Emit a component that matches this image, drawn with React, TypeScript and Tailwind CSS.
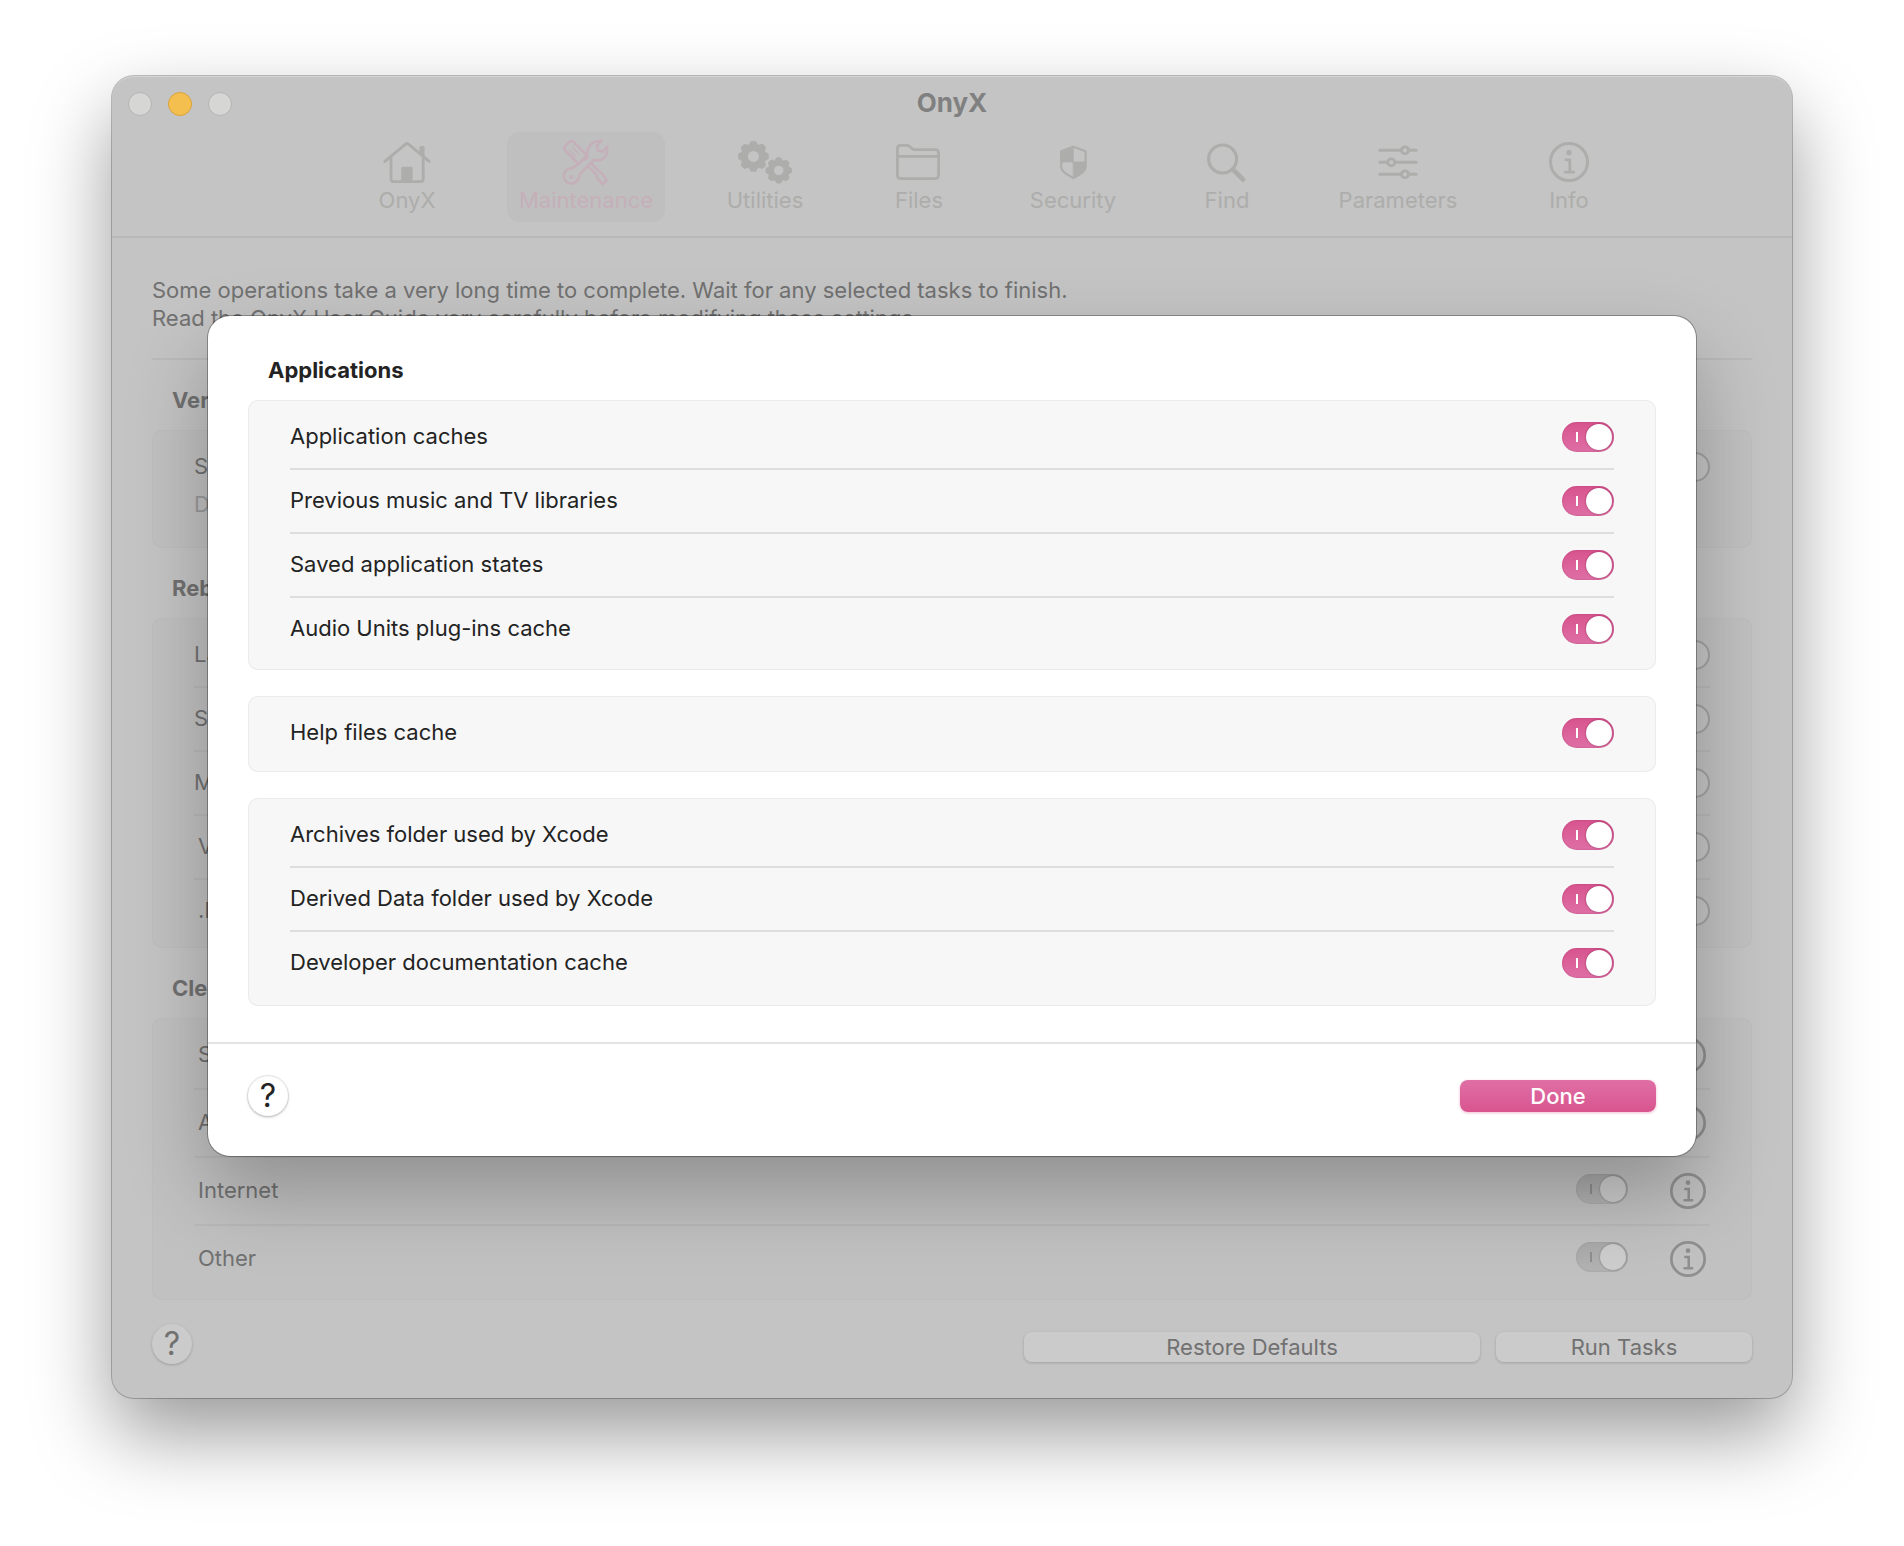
import React, { useId } from "react";

const FONT = "font-['Inter','Liberation_Sans',sans-serif]";

/* ---------- Toolbar icons ---------- */

function Icon({ children }: { children: React.ReactNode }) {
  return (
    <svg
      viewBox="0 0 56 48"
      className="h-12 w-14"
      fill="none"
      stroke="currentColor"
      strokeWidth="2.8"
      strokeLinecap="round"
      strokeLinejoin="round"
      aria-hidden="true"
    >
      {children}
    </svg>
  );
}

function HomeIcon() {
  return (
    <Icon>
      <path d="M5.8 23.4 26.6 6.1a2.2 2.2 0 0 1 2.8 0L50.2 23.4" />
      <path d="M12 19v22a2.6 2.6 0 0 0 2.6 2.6h27A2.6 2.6 0 0 0 44.2 41V19" />
      <rect x="22.3" y="28.8" width="11.3" height="14.8" rx="1.2" fill="currentColor" stroke="none" />
      <path d="M40.4 15V9.500a1.500 1.500 0 0 1 1.500-1.500h2.200a1.500 1.500 0 0 1 1.500 1.500V19.500z" fill="currentColor" stroke="none" />
    </Icon>
  );
}

function ToolsIcon() {
  return (
    <Icon>
      <g strokeWidth="2.5">
        <path d="M20.5 26 7.2 12.7c-1.5-1.5-1.5-3 0-4.5l4-4c1.5-1.5 3-1.5 4.5 0L29 17.5z" />
        <path d="M11.5 12.3 17.3 18.3M14.8 9.8 20.3 15.5" strokeWidth="1.5" />
        <path d="M29.5 19.5C27.7 12 31.5 2.8 43.5 2.8L38.7 7.8l1.3 4.7 4.4 1.2 4.7-5C50.5 17 45 24.3 35.6 21.8L23 34.8c-1.5 1.5-1.7 4.5-3.2 7.2A7.6 7.6 0 1 1 8.2 32.4c2.3-2 6.3-1.9 8.3-3.6z" />
        <circle cx="13.2" cy="39" r="2" fill="currentColor" stroke="none" />
        <path d="M29.8 28.2 38.4 36.6l.5 3.2 5.8 6.4 3.9-3.8-4.2-6.7-2.7-1.8L33.3 25.4" />
      </g>
    </Icon>
  );
}

const TEETH = [0, 45, 90, 135, 180, 225, 270, 315];

function Gear({ cx, cy, r }: { cx: number; cy: number; r: number }) {
  return (
    <g>
      <circle cx={cx} cy={cy} r={r * 0.57} strokeWidth={r * 0.43} />
      {TEETH.map((angle) => (
        <path
          key={angle}
          d={`M${cx - r * 0.24} ${cy - r * 0.72}L${cx - r * 0.12} ${cy - r * 0.92}H${cx + r * 0.12}L${cx + r * 0.24} ${cy - r * 0.72}z`}
          transform={`rotate(${angle} ${cx} ${cy})`}
          fill="currentColor"
          strokeWidth={r * 0.14}
        />
      ))}
    </g>
  );
}

function GearsIcon() {
  return (
    <Icon>
      <Gear cx={16.4} cy={18.4} r={15.5} />
      <Gear cx={41.7} cy={32.4} r={13.3} />
    </Icon>
  );
}

function FolderIcon() {
  return (
    <Icon>
      <path d="M6.4 37V11c0-2.4 1.2-3.6 3.6-3.6h6.2c3 0 4 4.2 7.2 4.2H44c2.4 0 3.6 1.2 3.6 3.6V37c0 2.4-1.2 3.6-3.6 3.6H10c-2.4 0-3.6-1.2-3.6-3.6zM6.4 18.4h41.2" />
    </Icon>
  );
}

function ShieldIcon() {
  return (
    <Icon>
      <path d="M28.4 8.8 40.6 13.3V29c0 5-7 8.5-12.2 11C23.2 37.5 16.2 34 16.2 29V13.3z" strokeWidth="2.2" />
      <path d="M28.4 8.8V24H16.2V13.3zM28.4 24h12.2v5c0 5-7 8.5-12.2 11z" fill="currentColor" strokeWidth="0.6" />
    </Icon>
  );
}

function FindIcon() {
  return (
    <Icon>
      <circle cx="23.6" cy="21" r="14" strokeWidth="3.2" />
      <path d="M34 31.5 44 41.5" strokeWidth="4.6" />
    </Icon>
  );
}

function SlidersIcon() {
  return (
    <Icon>
      <path d="M9.8 12.3h21.2M39.2 12.3h7M9.8 24.3h7.2M25.5 24.3h20.7M9.8 36.3h21.2M39.2 36.3h7" strokeWidth="3" />
      <circle cx="35" cy="12.3" r="3.5" />
      <circle cx="21.3" cy="24.3" r="3.5" />
      <circle cx="35" cy="36.3" r="3.5" />
    </Icon>
  );
}

function InfoShape() {
  return (
    <>
      <circle cx="28" cy="24" r="18.5" strokeWidth="3" />
      <circle cx="28" cy="14.7" r="2.6" fill="currentColor" stroke="none" />
      <path d="M25 21.8h3.8V34M24.2 34.2h8.4" strokeWidth="2.8" />
    </>
  );
}

const TOOLBAR = [
  { label: "OnyX", icon: <HomeIcon />, width: "w-[108px]" },
  { label: "Maintenance", icon: <ToolsIcon />, width: "w-[158px]", active: true },
  { label: "Utilities", icon: <GearsIcon />, width: "w-[108px]" },
  { label: "Files", icon: <FolderIcon />, width: "w-[108px]" },
  { label: "Security", icon: <ShieldIcon />, width: "w-[108px]" },
  { label: "Find", icon: <FindIcon />, width: "w-[108px]" },
  { label: "Parameters", icon: <SlidersIcon />, width: "w-[142px]" },
  {
    label: "Info",
    icon: (
      <Icon>
        <InfoShape />
      </Icon>
    ),
    width: "w-[108px]",
  },
];

/* ---------- Controls ---------- */

function Switch({ id }: { id: string }) {
  return (
    <input
      id={id}
      type="checkbox"
      role="switch"
      defaultChecked
      className="relative h-[30px] w-[52px] shrink-0 appearance-none rounded-full bg-linear-to-b from-[#d8538e] to-[#de6fa5] shadow-[inset_0_0_2px_rgba(130,30,80,0.4)] before:absolute before:top-[2px] before:left-6 before:size-[26px] before:rounded-full before:bg-white before:shadow-[0_0_2px_rgba(90,10,50,0.6)] after:absolute after:top-[10px] after:left-[14px] after:h-[10px] after:w-[2px] after:bg-white"
    />
  );
}

function DimSwitch({ id }: { id: string }) {
  return (
    <input
      id={id}
      type="checkbox"
      role="switch"
      defaultChecked
      disabled
      className="relative mb-1 h-[30px] w-[52px] shrink-0 appearance-none rounded-full bg-linear-to-b from-[#a9a9a9] to-[#b3b3b3] shadow-[inset_0_0_2px_rgba(0,0,0,0.15)] before:absolute before:top-[2px] before:left-6 before:size-[26px] before:rounded-full before:bg-[#cdcdcd] before:shadow-[0_0_2px_rgba(0,0,0,0.35)] after:absolute after:top-[10px] after:left-[14px] after:h-[10px] after:w-[2px] after:bg-[#8e8e8e]"
    />
  );
}

function OutlineSwitch({ id }: { id: string }) {
  return (
    <input
      id={id}
      type="checkbox"
      role="switch"
      disabled
      className="h-[30px] w-[52px] shrink-0 appearance-none rounded-full border-2 border-[#a2a2a2] bg-[#c6c6c6]"
    />
  );
}

function SettingRow({ label }: { label: string }) {
  const id = useId();
  return (
    <div className="flex h-16 items-center justify-between border-b-2 border-[#dedede] last:h-[62px] last:border-b-0">
      <label htmlFor={id} className="pb-0.5">
        {label}
      </label>
      <Switch id={id} />
    </div>
  );
}

function DimRow({ label, indent }: { label: string; indent?: boolean }) {
  const id = useId();
  return (
    <div className="flex h-16 items-center justify-between border-b-2 border-[#b9b9b9] last:h-[62px] last:border-b-0">
      <label htmlFor={id} className={indent ? "pb-0.5 pl-1" : "pb-0.5"}>
        {label}
      </label>
      <OutlineSwitch id={id} />
    </div>
  );
}

function CleaningRow({ label }: { label: string }) {
  const id = useId();
  return (
    <div className="flex h-[68px] items-center border-b-2 border-[#b9b9b9] px-1 last:h-[66px] last:border-b-0">
      <label htmlFor={id} className="flex-1 pb-0.5">
        {label}
      </label>
      <DimSwitch id={id} />
      <button type="button" aria-label={`About ${label}`} className="ml-[42px] flex size-9 items-center justify-center text-[#8f8f8f]">
        <svg viewBox="8 4 40 40" className="size-9" fill="none" stroke="currentColor" strokeLinecap="round" aria-hidden="true">
          <InfoShape />
        </svg>
      </button>
    </div>
  );
}

const DIM_CARD = "rounded-[10px] bg-[#c1c1c1] px-[42px] shadow-[inset_0_0_0_1px_#bebebe]";

const GROUPS = [
  {
    items: [
      "Application caches",
      "Previous music and TV libraries",
      "Saved application states",
      "Audio Units plug-ins cache",
    ],
    pad: "pb-2.5",
  },
  { items: ["Help files cache"], pad: "pb-2" },
  {
    items: ["Archives folder used by Xcode", "Derived Data folder used by Xcode", "Developer documentation cache"],
    pad: "pb-3",
  },
];

/* ---------- Dialog ---------- */

function ApplicationsDialog() {
  return (
    <div
      role="dialog"
      aria-label="Applications"
      className="absolute inset-x-24 top-[240px] rounded-[22px] bg-white text-[#232323] shadow-[0_0_0_1px_rgba(0,0,0,0.3),0_36px_80px_rgba(0,0,0,0.26)]"
    >
      <div className="px-10 pt-10 pb-9">
        <h2 className="mb-4 pl-5 leading-7 font-bold">Applications</h2>
        <div className="flex flex-col gap-[26px]">
          {GROUPS.map((group) => (
            <div
              key={group.items[0]}
              className={`rounded-[10px] bg-[#f7f7f7] px-[42px] pt-1.5 shadow-[inset_0_0_0_1px_#ebebeb] ${group.pad}`}
            >
              {group.items.map((item) => (
                <SettingRow key={item} label={item} />
              ))}
            </div>
          ))}
        </div>
      </div>
      <div className="flex items-center justify-between border-t-2 border-[#e4e4e4] px-10 pt-8 pb-10">
        <button
          type="button"
          aria-label="Help"
          className="flex size-10 items-center justify-center rounded-full bg-white text-[32px] leading-none shadow-[0_0_1px_1px_rgba(0,0,0,0.08),0_1px_3px_rgba(0,0,0,0.25)]"
        >
          ?
        </button>
        <button
          type="button"
          className="flex h-8 w-[196px] items-center justify-center rounded-lg bg-linear-to-b from-[#df6fa5] to-[#d9548f] font-medium text-white shadow-[0_1px_3px_rgba(217,84,143,0.4)]"
        >
          Done
        </button>
      </div>
    </div>
  );
}

/* ---------- Window ---------- */

export default function App() {
  return (
    <div className={`bg-white px-28 pt-[76px] pb-[148px] text-[22px] leading-7 ${FONT}`}>
      <main className="relative rounded-[22px] bg-[#c4c4c4] text-[#717171] shadow-[inset_0_2px_1px_-1px_rgba(255,255,255,0.3),0_0_0_1px_rgba(0,0,0,0.24),0_36px_80px_rgba(0,0,0,0.4)]">
        <header className="border-b-2 border-[#b8b8b8] pb-3.5">
          <div className="grid h-14 grid-cols-[1fr_auto_1fr] items-center px-4">
            <div className="flex gap-4">
              <button type="button" aria-label="Close" className="size-6 rounded-full border border-[#b4b4b4] bg-[#d6d6d5]" />
              <button type="button" aria-label="Minimize" className="size-6 rounded-full border border-[#d9a33c] bg-[#f5bf4f]" />
              <button type="button" aria-label="Zoom" className="size-6 rounded-full border border-[#b4b4b4] bg-[#d6d6d5]" />
            </div>
            <h1 className="pb-0.5 text-[26px] leading-8 font-bold text-[#808080]">OnyX</h1>
          </div>
          <nav className="flex justify-center gap-[46px] pl-[72px]">
            {TOOLBAR.map((item) => (
              <button
                key={item.label}
                type="button"
                className={`flex h-[90px] flex-col items-center rounded-xl pt-1.5 ${item.width} ${
                  item.active ? "bg-[#bfbfbf] text-[#c5afb9]" : "text-[#adadab]"
                }`}
              >
                {item.icon}
                <span className="leading-7">{item.label}</span>
              </button>
            ))}
          </nav>
        </header>

        <div className="px-10 pt-[38px]">
          <p className="border-b-2 border-[#bababa] pb-[26px]">
            Some operations take a very long time to complete. Wait for any selected tasks to finish.
            <br />
            Read the OnyX User Guide very carefully before modifying these settings.
          </p>

          <h2 className="mt-[26px] mb-4 pl-5 font-bold">Verification</h2>
          <div className={`${DIM_CARD} h-[118px] pt-1.5`}>
            <div className="flex h-[62px] items-center justify-between">
              <label htmlFor="structure" className="pb-0.5">
                Structure of the file system
              </label>
              <OutlineSwitch id="structure" />
            </div>
            <p className="-mt-2 text-[#9a9a9a]">Disk verification</p>
          </div>

          <h2 className="mt-[26px] mb-4 pl-5 font-bold">Rebuilding</h2>
          <div className={`${DIM_CARD} pt-1.5 pb-1.5`}>
            <DimRow label="LaunchServices database" />
            <DimRow label="Spotlight index" />
            <DimRow label="Mailboxes index" />
            <DimRow label="Volumes list" indent />
            <DimRow label=".DS_Store files" indent />
          </div>

          <h2 className="mt-[26px] mb-4 pl-5 font-bold">Cleaning</h2>
          <div className={`${DIM_CARD} pt-1 pb-2`}>
            <CleaningRow label="System" />
            <CleaningRow label="Applications" />
            <CleaningRow label="Internet" />
            <CleaningRow label="Other" />
          </div>

          <footer className="flex items-end pt-6 pb-8">
            <button
              type="button"
              aria-label="Help"
              className="mr-auto mb-0.5 flex size-10 items-center justify-center rounded-full bg-[#cbcbcb] text-[32px] leading-none shadow-[0_1px_3px_rgba(0,0,0,0.2)]"
            >
              ?
            </button>
            <button
              type="button"
              className="mr-4 mb-1 flex h-[30px] w-[456px] items-center justify-center rounded-lg bg-[#cbcbcb] shadow-[0_1px_3px_rgba(0,0,0,0.18)]"
            >
              Restore Defaults
            </button>
            <button
              type="button"
              className="mb-1 flex h-[30px] w-64 items-center justify-center rounded-lg bg-[#cbcbcb] shadow-[0_1px_3px_rgba(0,0,0,0.18)]"
            >
              Run Tasks
            </button>
          </footer>
        </div>

        <ApplicationsDialog />
      </main>
    </div>
  );
}
